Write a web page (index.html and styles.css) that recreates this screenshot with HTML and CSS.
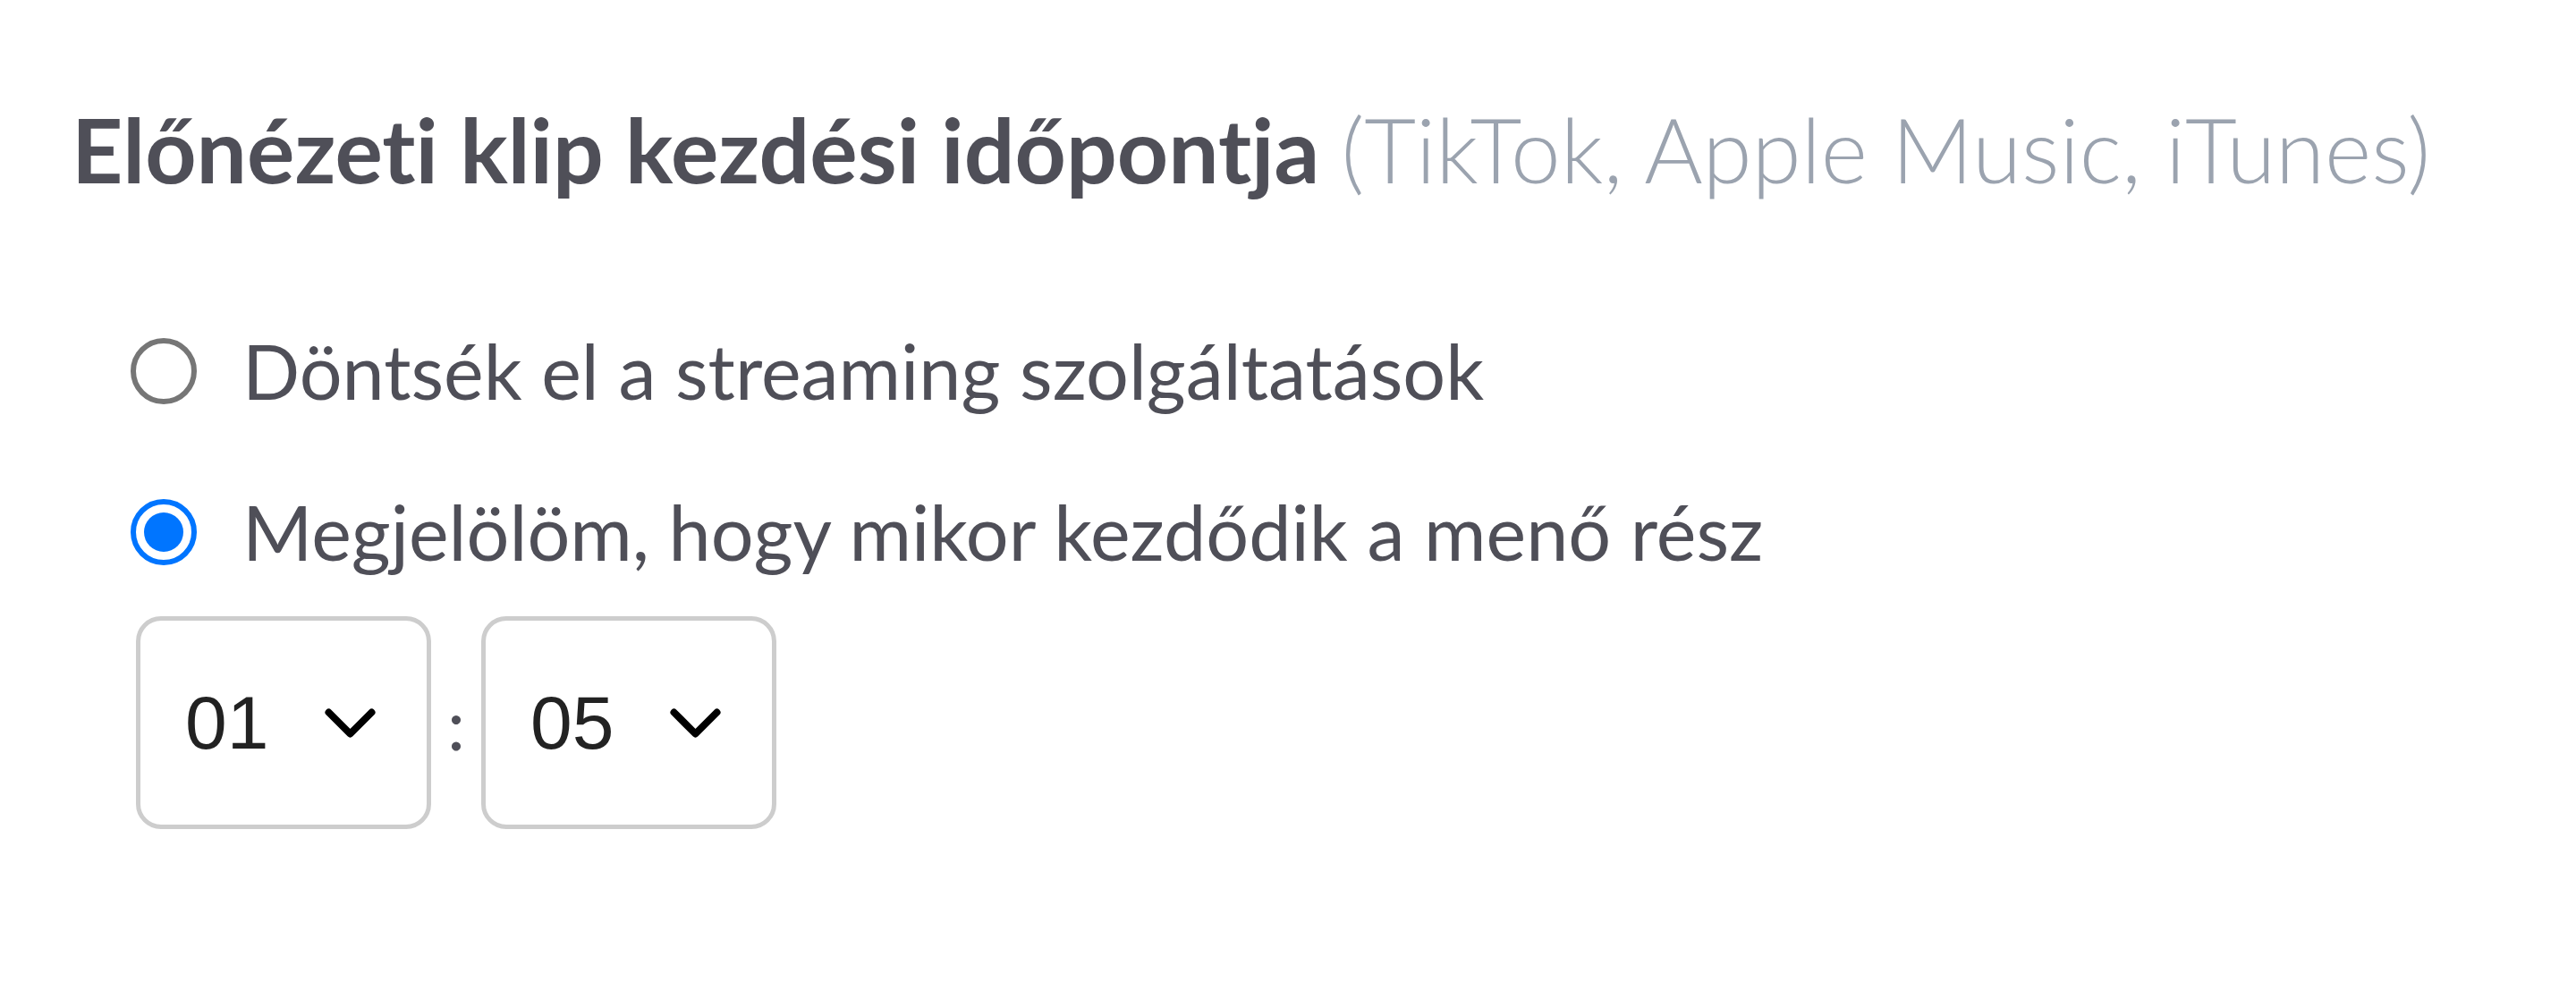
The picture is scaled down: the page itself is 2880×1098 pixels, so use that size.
FILE: index.html
```html
<!DOCTYPE html>
<html lang="hu">
<head>
    <meta charset="UTF-8">
    <title>Előnézeti klip</title>
    <link rel="stylesheet" href="styles.css">
</head>
<body>
    <section class="clip-start">
        <!-- cím -->
        <h1 class="clip-title">Előnézeti klip kezdési időpontja <span class="clip-hint">(TikTok, Apple Music, iTunes)</span></h1>

        <!-- választási lehetőségek -->
        <div class="options">
            <label class="option">
                <span class="radio"></span>
                <span class="option-text">Döntsék el a streaming szolgáltatások</span>
            </label>
            <label class="option">
                <span class="radio checked"></span>
                <span class="option-text">Megjelölöm, hogy mikor kezdődik a menő rész</span>
            </label>

            <div class="time-picker">
                <div class="select">
                    <span class="select-value">01</span>
                    <svg class="chevron" width="57" height="33" viewBox="0 0 57 33" fill="none">
                        <path d="M4.5 4.5L28.5 28.5L52.5 4.5" stroke="#000" stroke-width="8" stroke-linecap="round" stroke-linejoin="round"/>
                    </svg>
                </div>
                <span class="colon">:</span>
                <div class="select">
                    <span class="select-value">05</span>
                    <svg class="chevron" width="57" height="33" viewBox="0 0 57 33" fill="none">
                        <path d="M4.5 4.5L28.5 28.5L52.5 4.5" stroke="#000" stroke-width="8" stroke-linecap="round" stroke-linejoin="round"/>
                    </svg>
                </div>
            </div>
        </div>
    </section>
</body>
</html>
```

FILE: styles.css
```css
:root {
    --text: #4f4f58;
    --text-light: #9ba3af;
    --radio-border: #767676;
    --radio-active: #0075ff;
    --select-border: #cdcdcd;
}

body {
    margin: 0;
    background: #ffffff;
    font-family: 'Lato', 'Noto Sans', sans-serif;
    font-variant-ligatures: none;
    color: var(--text);
}

.clip-start {
    padding: 106px 0 0 80px;
}

/* cím */
.clip-title {
    margin: 0;
    font-size: 100px;
    line-height: 120px;
    font-weight: 700;
    color: var(--text);
}

.clip-hint {
    font-weight: 300;
    color: var(--text-light);
}

/* opciók */
.options {
    margin-top: 141px;
    margin-left: 66px;
}

.option {
    display: flex;
    align-items: center;
    gap: 51px;
    height: 96px;
    font-size: 84.5px;
    line-height: 96px;
}

.option + .option {
    margin-top: 84px;
}

.radio {
    width: 74px;
    height: 74px;
    box-sizing: border-box;
    border: 6px solid var(--radio-border);
    border-radius: 50%;
    flex-shrink: 0;
    display: flex;
    align-items: center;
    justify-content: center;
}

.radio.checked {
    border-color: var(--radio-active);
}

.radio.checked::after {
    content: "";
    width: 44px;
    height: 44px;
    border-radius: 50%;
    background: var(--radio-active);
}

/* időválasztó */
.time-picker {
    display: flex;
    align-items: center;
    margin-top: 46px;
    margin-left: 6px;
}

.select {
    width: 330px;
    height: 238px;
    box-sizing: border-box;
    border: 5px solid var(--select-border);
    border-radius: 28px;
    display: flex;
    align-items: center;
    justify-content: space-between;
    padding: 0 57px 0 50px;
    background: #ffffff;
}

.select-value {
    font-family: 'Liberation Sans', Arial, sans-serif;
    font-size: 84px;
    line-height: 1;
    color: #222222;
}

.chevron {
    display: block;
    flex-shrink: 0;
}

.colon {
    width: 56px;
    text-align: center;
    font-size: 80px;
    line-height: 1;
    color: var(--text);
}
```
